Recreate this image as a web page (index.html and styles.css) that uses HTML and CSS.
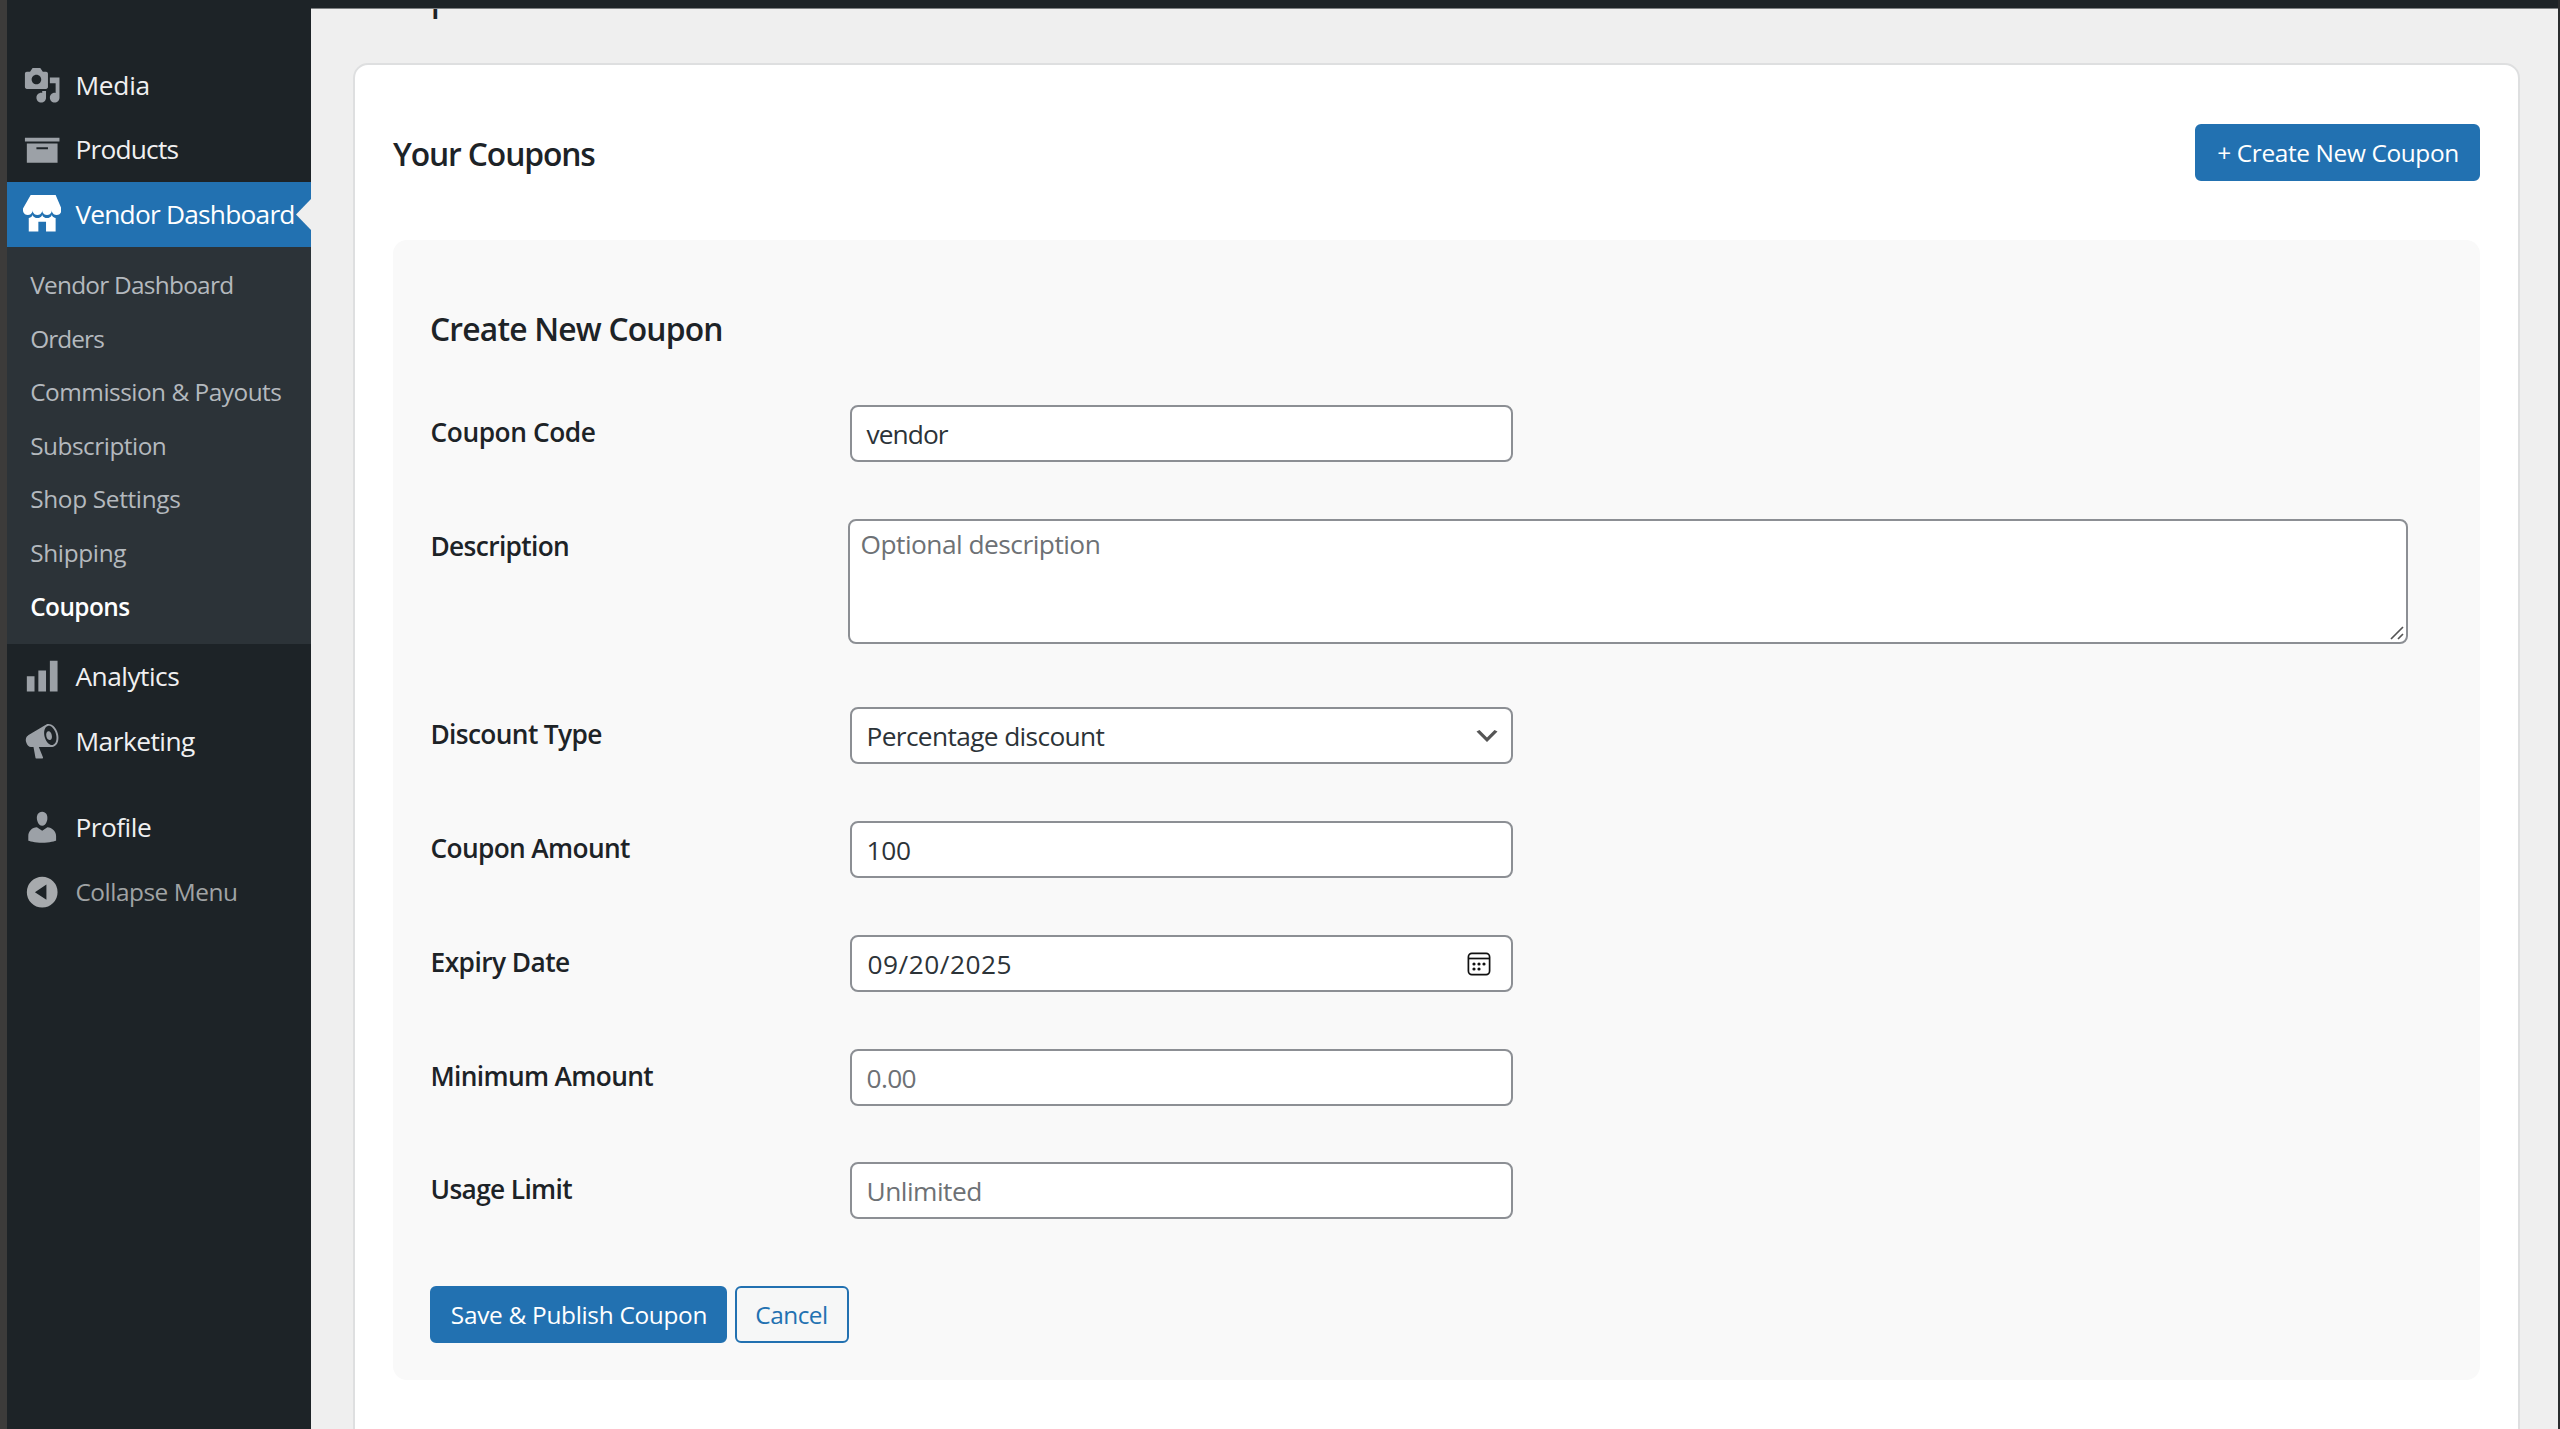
FILE: index.html
```html
<!DOCTYPE html>
<html lang="en">
<head>
<meta charset="utf-8">
<title>Coupons</title>
<link rel="stylesheet" href="styles.css">
</head>
<body>
<div class="window">
  <header class="topbar"></header>
  <div class="layout">
    <nav class="sidebar">
      <a class="item ls-media"><svg class="icon" viewBox="0 0 20 20"><path d="M13 11V4c0-.55-.45-1-1-1h-1.67L9 1H5L3.67 3H2c-.55 0-1 .45-1 1v7c0 .55.45 1 1 1h10c.55 0 1-.45 1-1zM7 4.5c1.38 0 2.5 1.12 2.5 2.5S8.38 9.500 7 9.500 4.500 8.380 4.500 7 5.620 4.500 7 4.500zM14 6h5v10.500c0 1.380-1.120 2.500-2.500 2.500S14 17.880 14 16.500s1.120-2.500 2.500-2.500c.17 0 .34.02.5.05V9h-3V6zm-4 8.050V13h2v3.500c0 1.380-1.120 2.500-2.500 2.500S7 17.880 7 16.500 8.120 14 9.500 14c.17 0 .34.02.5.05z"/></svg><span>Media</span></a>
      <a class="item ls-products"><svg class="icon" viewBox="0 0 20 20"><path d="M19 4v2H1V4h18zM2 7h16v10H2V7zm11 3V9H7v1h6z"/></svg><span>Products</span></a>
      <a class="item item-current"><svg class="icon" viewBox="0 0 20 20"><path d="M1 10c.41.29.96.43 1.500.43.55 0 1.090-.14 1.500-.43.62-.46 1-1.170 1-2 0 .83.37 1.540 1 2 .41.29.96.43 1.500.43.55 0 1.090-.14 1.500-.43.62-.46 1-1.170 1-2 0 .83.37 1.540 1 2 .41.29.96.43 1.510.43.54 0 1.080-.14 1.490-.43.62-.46 1-1.170 1-2 0 .83.37 1.540 1 2 .41.29.96.43 1.500.43.55 0 1.090-.14 1.500-.43.63-.46 1-1.170 1-2V7l-3-7H4L0 7v1c0 .83.37 1.540 1 2zm2 8.990h5v-5h4v5h5v-7c-.37-.05-.72-.22-1-.43-.63-.45-1-.73-1-1.560 0 .83-.38 1.110-1 1.560-.41.3-.95.43-1.490.44-.55 0-1.100-.14-1.510-.44-.63-.45-1-.73-1-1.560 0 .83-.38 1.110-1 1.560-.41.3-.95.43-1.500.44-.54 0-1.090-.14-1.500-.44-.63-.45-1-.73-1-1.570 0 .84-.38 1.120-1 1.570-.29.21-.63.38-1 .44v6.990z"/></svg><span>Vendor Dashboard</span><svg class="notch" viewBox="0 0 15 31"><path d="M15 0v31L0 15.500z"/></svg></a>
      <div class="submenu">
        <a class="sub ls-sub-vendor">Vendor Dashboard</a>
        <a class="sub ls-sub-orders">Orders</a>
        <a class="sub">Commission &amp; Payouts</a>
        <a class="sub">Subscription</a>
        <a class="sub ls-sub-shop">Shop Settings</a>
        <a class="sub ls-sub-shop">Shipping</a>
        <a class="sub sub-current">Coupons</a>
      </div>
      <a class="item"><svg class="icon" viewBox="0 0 20 20"><path d="M18 18V2h-4v16h4zm-6 0V7H8v11h4zm-6 0v-8H2v8h4z"/></svg><span>Analytics</span></a>
      <a class="item"><svg class="icon" viewBox="0 0 20 20"><path d="M18.150 5.940c.46 1.620.38 3.220-.02 4.480-.42 1.280-1.260 2.180-2.300 2.480-.16.06-.26.06-.4.06-.06.02-.12.02-.18.02-.06.02-.14.02-.22.02h-6.800l2.220 5.500c.02.14-.06.26-.14.34-.08.1-.24.16-.34.16H6.950c-.1 0-.26-.06-.34-.16-.08-.08-.16-.2-.14-.34l-1-5.500H4.250l-.02-.02c-.5.06-1.080-.18-1.540-.62s-.88-1.080-1.060-1.880c-.24-.8-.2-1.560-.02-2.200.18-.62.58-1.080 1.060-1.300l.02-.02 9-5.400c.1-.06.18-.1.24-.16.06-.04.14-.08.24-.12.16-.08.28-.12.5-.18 1.040-.3 2.240.1 3.220.98s1.840 2.240 2.260 3.860zm-2.580 5.980h-.02c.4-.1.74-.34 1.040-.7.58-.7.86-1.760.86-3.040 0-.64-.1-1.300-.28-1.980-.34-1.360-1.020-2.500-1.780-3.240s-1.680-1.100-2.460-.88c-.82.22-1.400.96-1.700 2-.32 1.040-.28 2.360.06 3.720.38 1.360 1 2.500 1.800 3.240.78.74 1.620 1.100 2.480.88zm-2.540-7.080c.22-.04.42-.02.62.04.38.16.76.48 1.020 1s.42 1.200.42 1.780c0 .3-.04.56-.12.8-.18.48-.44.84-.86.94-.34.1-.8-.06-1.140-.4s-.64-.86-.78-1.500c-.18-.62-.12-1.240.02-1.720s.48-.84.82-.94z"/></svg><span>Marketing</span></a>
      <div class="separator"></div>
      <a class="item"><svg class="icon" viewBox="0 0 20 20"><path d="M10 9.250c-2.270 0-2.730-3.440-2.730-3.440C7 4.020 7.820 2 9.970 2c2.160 0 2.980 2.020 2.710 3.810 0 0-.41 3.440-2.680 3.440zm0 2.570L12.720 10c2.390 0 4.520 2.330 4.520 4.530v2.490s-3.650 1.130-7.240 1.130c-3.650 0-7.240-1.130-7.240-1.130v-2.490c0-2.250 1.940-4.480 4.470-4.480z"/></svg><span>Profile</span></a>
      <a class="item item-collapse"><svg class="icon" viewBox="0 0 20 20"><path fill-rule="evenodd" d="M10 2a8 8 0 1 1 0 16a8 8 0 0 1 0-16zm2.200 12V6L6.200 10z"/></svg><span>Collapse Menu</span></a>
    </nav>
    <main class="content">
      <h1 class="page-title">Coupons</h1>
      <section class="card">
        <div class="card-head">
          <h2 class="heading ls-your">Your Coupons</h2>
          <button class="btn btn-create">+ Create New Coupon</button>
        </div>
        <form class="panel">
          <h2 class="heading panel-heading">Create New Coupon</h2>
          <div class="row"><label class="label ls-code">Coupon Code</label><div class="field ls-vendor">vendor</div></div>
          <div class="row row-area"><label class="label">Description</label><div class="area"><span>Optional description</span><svg class="grip" viewBox="0 0 14 14"><path d="M1 13L13 1M8 13L13 8"/></svg></div></div>
          <div class="row"><label class="label">Discount Type</label><div class="field">Percentage discount<svg class="chevron" viewBox="0 0 20 20"><path d="M5 6l5 5 5-5 2 1-7 7-7-7 2-1z"/></svg></div></div>
          <div class="row"><label class="label">Coupon Amount</label><div class="field ls-number">100</div></div>
          <div class="row"><label class="label ls-expiry">Expiry Date</label><div class="field field-date">09/20/2025<svg class="calendar" viewBox="0 0 24 24"><rect x="1.400" y="1.400" width="21.200" height="21.200" rx="3.500"/><path d="M1.400 6.500h21.200"/><g><circle cx="7" cy="12" r="1.600"/><circle cx="12" cy="12" r="1.600"/><circle cx="17" cy="12" r="1.600"/><circle cx="7" cy="17" r="1.600"/><circle cx="12" cy="17" r="1.600"/></g></svg></div></div>
          <div class="row"><label class="label">Minimum Amount</label><div class="field placeholder">0.00</div></div>
          <div class="row"><label class="label">Usage Limit</label><div class="field placeholder ls-unlimited">Unlimited</div></div>
          <div class="actions">
            <button class="btn btn-save" type="button">Save &amp; Publish Coupon</button>
            <button class="btn btn-cancel" type="button">Cancel</button>
          </div>
        </form>
      </section>
    </main>
  </div>
</div>
</body>
</html>
```
FILE: styles.css
```css
* { box-sizing: border-box; }
body { margin: 0; font-family: "Open Sans", "Noto Sans", sans-serif; color: #1d2327; }
.window { height: 1429px; overflow: hidden; display: flex; flex-direction: column; background: #efefef; border-left: 7px solid #3c3b3a; border-right: 2px solid #2a2c2e; }
.topbar { flex: none; height: 8px; background: #1d2327; }
.layout { flex: 1; min-height: 0; display: flex; }

/* Sidebar */
.sidebar { flex: none; width: 304px; background: #1d2327; padding-top: 44.300px; }
.item { position: relative; display: flex; align-items: center; height: 64.800px; padding-left: 15.700px; gap: 14.300px; color: #f0f0f1; font-size: 26.300px; letter-spacing: -.5px; white-space: nowrap; }
.icon { flex: none; width: 38.400px; height: 38.400px; fill: #9ca1a7; }
.item-current { background: #2271b1; color: #fff; letter-spacing: -.78px; }
.item-current .icon { fill: #fff; }
.notch { position: absolute; right: 0; top: 17px; width: 15px; height: 31px; fill: #efefef; }
.item-collapse { color: #a0a3a5; font-size: 24.400px; letter-spacing: -.46px; height: 64.500px; }
.item-collapse .icon { fill: #a7aaad; }
.separator { height: 21.600px; }
.submenu { height: 397px; padding: 12.300px 0 0 23.200px; background: #2c3338; }
.sub { display: block; height: 53.600px; line-height: 51px; font-size: 24.400px; letter-spacing: -.5px; color: #b4b9be; white-space: nowrap; }
.sub-current { color: #fff; font-weight: 600; letter-spacing: -.57px; }

/* Content */
.content { flex: 1; min-width: 0; overflow: hidden; border-top: 1px solid #7d8082; padding: 0 38.500px 0 42px; }
.page-title { margin: -50px 0 0 -1px; height: 104px; font-size: 44px; line-height: 64px; font-weight: 400; letter-spacing: -1.100px; }
.card { height: 1500px; padding: 59px 38px 0; background: #fff; border: 2px solid #dedfe0; border-radius: 15px; }
.card-head { display: flex; justify-content: space-between; height: 116px; }
.heading { margin: 0; font-size: 31.800px; font-weight: 600; line-height: 60px; letter-spacing: -.8px; white-space: nowrap; }
.panel { height: 1140px; padding: 58px 37px 0; background: #f9f9f9; border-radius: 14px; }
.panel-heading { height: 107px; line-height: 61px; }
.row { display: grid; grid-template-columns: 420px 1fr; align-items: start; height: 113.800px; }
.row-area { height: 188.400px; }
.label { font-size: 26.300px; font-weight: 600; line-height: 55px; padding-left: .5px; letter-spacing: -.65px; white-space: nowrap; }
.field { display: flex; align-items: center; justify-content: space-between; width: 663px; height: 57px; padding: 1px 0 0 14.500px; background: #fff; border: 2px solid #8c8f94; border-radius: 8px; color: #2c3338; font-size: 26.300px; letter-spacing: -.64px; }
.area { position: relative; margin-left: -2px; width: 1559.500px; height: 125px; padding: 5px 10.500px; border: 2px solid #8c8f94; border-radius: 8px; background: #fff; color: #6d7175; font-size: 26.300px; line-height: 36px; letter-spacing: -.51px; }
.grip { position: absolute; right: 1.500px; bottom: 1.500px; width: 14px; height: 14px; fill: none; stroke: #555; stroke-width: 1.700; }
.chevron { width: 30px; height: 30px; margin-right: 9px; fill: #555; }
.field-date { padding-left: 15.500px; letter-spacing: .5px; }
.calendar { width: 24px; height: 24px; margin-right: 20px; fill: none; stroke: #111; stroke-width: 1.700; }
.calendar g { fill: #111; stroke: none; }
.placeholder { color: #6d7175; }
.actions { display: flex; gap: 8px; padding-top: 9.600px; }

/* Buttons */
.btn { height: 57px; padding: 0 0 0 1px; border: 2px solid #2271b1; border-radius: 6px; background: #2271b1; color: #fff; font: 400 24.400px "Open Sans", "Noto Sans", sans-serif; letter-spacing: -.3px; white-space: nowrap; }
.btn-create { width: 285px; padding-left: 2px; letter-spacing: -.36px; }
.btn-save { width: 297px; }
.btn-cancel { width: 114px; padding: 0 1px 0 0; background: #f6f7f7; color: #2271b1; letter-spacing: -.5px; }

/* Tracking for individual strings */
.ls-media { letter-spacing: -.25px; }
.ls-products { letter-spacing: -.78px; }
.ls-sub-vendor { letter-spacing: -.74px; }
.ls-sub-orders { letter-spacing: -.91px; }
.ls-sub-shop { letter-spacing: -.34px; }
.ls-your { letter-spacing: -1.120px; }
.ls-code { letter-spacing: -.42px; }
.ls-expiry { letter-spacing: -.55px; }
.ls-vendor { letter-spacing: -.92px; }
.ls-number { letter-spacing: -.3px; }
.ls-unlimited { letter-spacing: -.5px; }
```
